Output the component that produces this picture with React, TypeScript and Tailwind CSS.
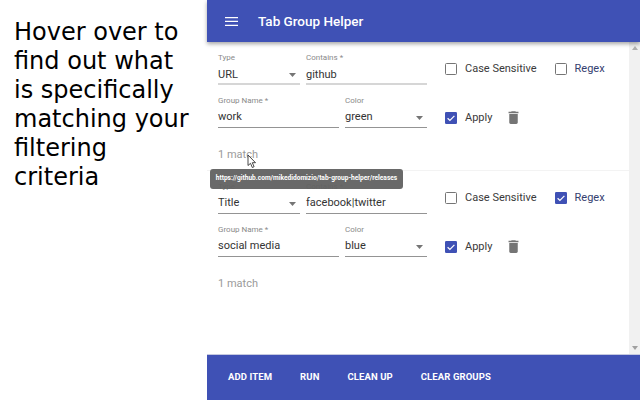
import React from "react";

function Field({ label, value, select, w, muted }: { label: string; value: string; select?: boolean; w: string; muted?: boolean }) {
  return (
    <div className={`${w} h-[33px] flex flex-col shrink-0`}>
      <div className="text-[8px] leading-[11px] text-[#8a8a8a] h-[11px] whitespace-nowrap">{label}</div>
      <div className={`relative flex-1 flex items-center ${muted ? "border-b-2 border-[#d6d6d6] pt-[3px]" : "border-b border-[#949494] pt-[1px]"}`}>
        <span className="text-[11px] leading-[14px] text-[#333] whitespace-nowrap">{value}</span>
        {select && (
          <svg className="absolute right-[4px] top-[10px]" width="7" height="4" viewBox="0 0 7 4">
            <path d="M0 0h7L3.5 4z" fill="#757575" />
          </svg>
        )}
      </div>
    </div>
  );
}

function Check({ label, checked, labelClass = "" }: { label: string; checked?: boolean; labelClass?: string }) {
  return (
    <div className="flex items-center gap-[8px]">
      {checked ? (
        <svg width="12" height="12" viewBox="0 0 12 12" className="shrink-0">
          <rect width="12" height="12" rx="1.3" fill="#3f51b5" />
          <path d="M2.6 6.2 4.9 8.4 9.4 3.8" fill="none" stroke="#fff" strokeWidth="1.2" />
        </svg>
      ) : (
        <span className="w-[12px] h-[12px] border-[1.5px] border-[#757575] rounded-[1.5px] shrink-0" />
      )}
      <span className={`text-[11px] leading-[14px] text-[#3a3a3a] whitespace-nowrap ${labelClass}`}>{label}</span>
    </div>
  );
}

function Trash() {
  return (
    <svg width="17" height="17" viewBox="0 0 24 24" className="shrink-0">
      <path d="M6 19c0 1.1.9 2 2 2h8c1.1 0 2-.9 2-2V7H6v12zM19 4h-3.5l-1-1h-5l-1 1H5v2h14V4z" fill="#757575" />
    </svg>
  );
}

function Item({ type, containsLabel, contains, group, color, regex, separator, muted }: { type: string; containsLabel: string; contains: string; group: string; color: string; regex?: boolean; separator?: boolean; muted?: boolean }) {
  return (
    <div className={`pl-[11px] ${separator ? "border-b border-[#f3f3f3] h-[119px]" : ""}`}>
      <div className="flex">
        <div className="flex flex-col gap-[10px] w-[209px] shrink-0">
          <div className="flex gap-[6px]">
            <Field label="Type" value={type} select w="w-[82px]" muted={muted} />
            <Field label={containsLabel} value={contains} w="w-[121px]" muted={muted} />
          </div>
          <div className="flex gap-[6px]">
            <Field label="Group Name *" value={group} w="w-[121px]" />
            <Field label="Color" value={color} select w="w-[82px]" />
          </div>
        </div>
        <div className="pl-[18px] pt-[10px] flex flex-col gap-[33px]">
          <div className="flex gap-[18px]">
            <Check label="Case Sensitive" />
            <Check label="Regex" checked={regex} labelClass="text-[#34406f]" />
          </div>
          <div className="flex items-center gap-[13px]">
            <Check label="Apply" checked />
            <Trash />
          </div>
        </div>
      </div>
      <div className="mt-[20px] text-[11px] leading-[14px] text-[#9a9a9a]">1 match</div>
    </div>
  );
}

export default function App() {
  return (
    <div className="relative w-[640px] h-[400px] flex overflow-hidden bg-white font-['Roboto',sans-serif]">
      <div className="w-[207px] shrink-0 pl-[14px] pr-[13px] pt-[18px] font-['DejaVu_Sans',sans-serif] text-[24px] leading-[29px] text-black">
        Hover over to find out what is specifically matching your filtering criteria
      </div>
      <div className="flex-1 flex flex-col min-w-0">
        <header className="h-[42px] bg-[#3f51b5] flex items-center pl-[18px] gap-[20px] shadow-[0_2px_4px_rgba(0,0,0,0.35)] z-10 shrink-0">
          <svg width="13" height="9" viewBox="0 0 13 9">
            <path d="M0 0h13v1.3H0zM0 3.8h13v1.3H0zM0 7.7h13V9H0z" fill="#fff" />
          </svg>
          <span className="text-[13.5px] font-medium text-white">Tab Group Helper</span>
        </header>
        <div className="flex-1 flex min-h-0">
          <main className="flex-1 pt-[10px] flex flex-col">
            <Item type="URL" containsLabel="Contains *" contains="github" group="work" color="green" separator muted />
            <div className="mt-[10px]">
              <Item type="Title" containsLabel="Contains *" contains="facebook|twitter" group="social media" color="blue" regex />
            </div>
          </main>
          <div className="w-[11px] bg-[#f1f1f1] shrink-0 flex flex-col justify-between items-center py-[4px]">
            <svg width="6" height="4" viewBox="0 0 6 4"><path d="M3 0l3 4H0z" fill="#b0b0b0" /></svg>
            <svg width="6" height="4" viewBox="0 0 6 4"><path d="M0 0h6L3 4z" fill="#a0a0a0" /></svg>
          </div>
        </div>
        <footer className="h-[46px] bg-[#3f51b5] border-t border-[#c5c9e0] flex items-center pl-[21px] gap-[28px] shrink-0 text-[9.5px] font-bold tracking-[0.1px] text-white whitespace-nowrap">
          <span>ADD ITEM</span>
          <span>RUN</span>
          <span>CLEAN UP</span>
          <span>CLEAR GROUPS</span>
        </footer>
      </div>
      <div className="absolute left-[210px] top-[169px] w-[193px] h-[20px] rounded-[3px] bg-[#616161]/95 flex items-center justify-center text-[6.6px] font-bold text-white whitespace-nowrap z-20">
        https://github.com/mikedidomizio/tab-group-helper/releases
      </div>
      <svg className="absolute left-[247px] top-[154px] z-30" width="10" height="15" viewBox="0 0 10 15">
        <path d="M1 1v10.5l2.5-2.2 1.8 4.2 1.8-.8-1.8-4h3.2z" fill="#fff" stroke="#333" strokeWidth="0.9" />
      </svg>
    </div>
  );
}
